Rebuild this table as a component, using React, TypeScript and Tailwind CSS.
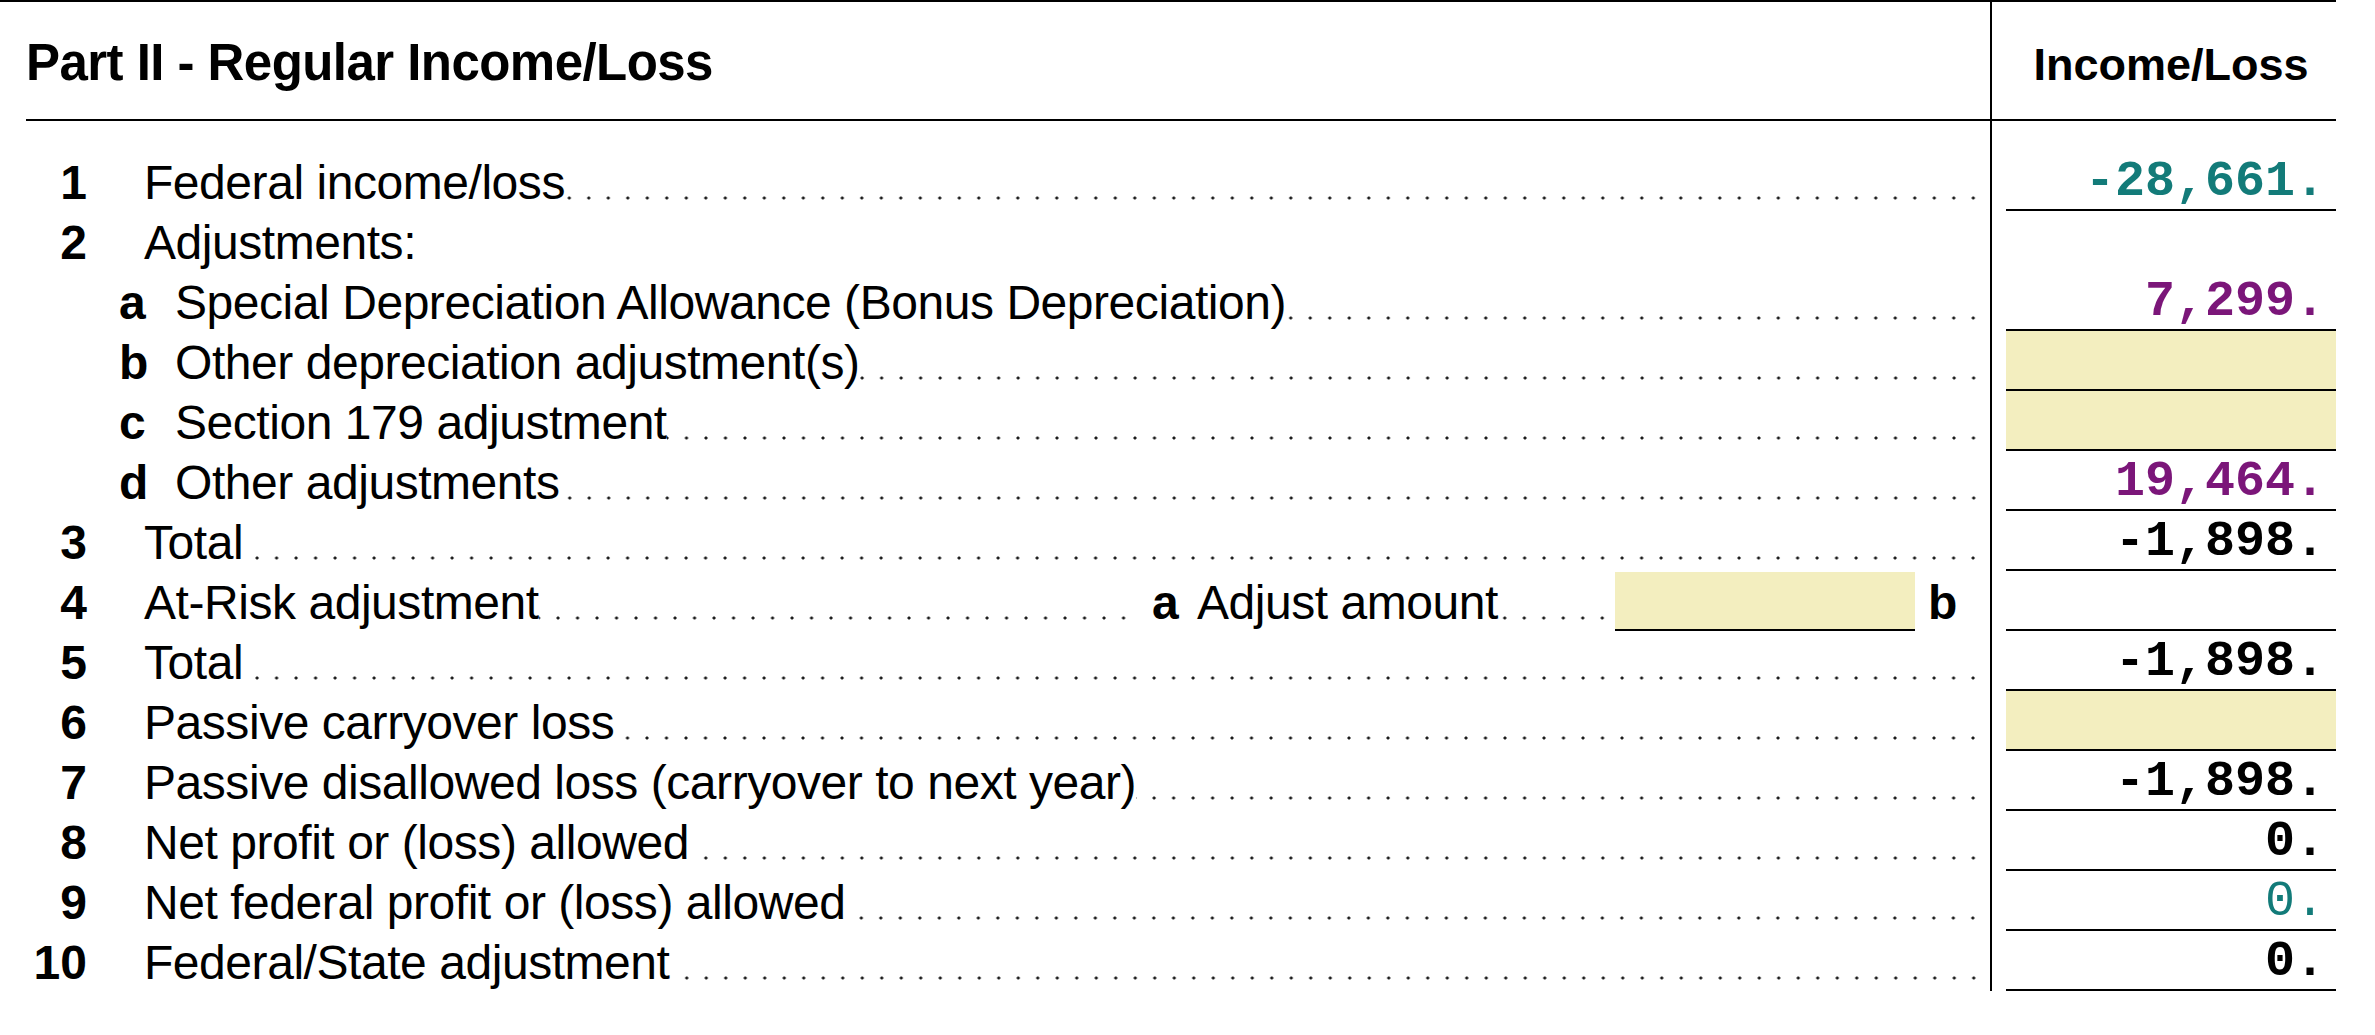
import React from "react";

type Cell = "none" | "line" | "yellow";
type RowData = {
  num?: string;
  letter?: string;
  label: string;
  leader?: boolean;
  value?: string;
  color?: "teal" | "purple" | "black";
  light?: boolean;
  cell: Cell;
  special?: boolean;
};

const rows: RowData[] = [
  { num: "1", label: "Federal income/loss", leader: true, value: "-28,661.", color: "teal", cell: "line" },
  { num: "2", label: "Adjustments:", cell: "none" },
  { letter: "a", label: "Special Depreciation Allowance (Bonus Depreciation)", leader: true, value: "7,299.", color: "purple", cell: "line" },
  { letter: "b", label: "Other depreciation adjustment(s)", leader: true, cell: "yellow" },
  { letter: "c", label: "Section 179 adjustment", leader: true, cell: "yellow" },
  { letter: "d", label: "Other adjustments", leader: true, value: "19,464.", color: "purple", cell: "line" },
  { num: "3", label: "Total", leader: true, value: "-1,898.", color: "black", cell: "line" },
  { num: "4", label: "At-Risk adjustment", leader: true, cell: "line", special: true },
  { num: "5", label: "Total", leader: true, value: "-1,898.", color: "black", cell: "line" },
  { num: "6", label: "Passive carryover loss", leader: true, cell: "yellow" },
  { num: "7", label: "Passive disallowed loss (carryover to next year)", leader: true, value: "-1,898.", color: "black", cell: "line" },
  { num: "8", label: "Net profit or (loss) allowed", leader: true, value: "0.", color: "black", cell: "line" },
  { num: "9", label: "Net federal profit or (loss) allowed", leader: true, value: "0.", color: "teal", light: true, cell: "line" },
  { num: "10", label: "Federal/State adjustment", leader: true, value: "0.", color: "black", cell: "line" },
];

const txt = "pt-[5px] leading-[54px] whitespace-nowrap";

function Leader({ className = "" }: { className?: string }) {
  return (
    <div
      className={`self-end mb-[10px] h-[6px] bg-[image:radial-gradient(circle,#1a1a1a_1.3px,transparent_1.8px)] bg-[length:19.5px_6px] bg-repeat-x bg-[position:right_center] ${className}`}
    />
  );
}

function ValueCell({ row }: { row: RowData }) {
  if (row.cell === "none") return null;
  const colorCls =
    row.color === "teal"
      ? "text-[#137b79]"
      : row.color === "purple"
      ? "text-[#7b1679]"
      : "text-black";
  return (
    <div
      className={`h-[60px] border-b-2 border-black flex justify-end pr-[11px] pt-[2px] ${
        row.cell === "yellow" ? "bg-[#f3eebf]" : ""
      }`}
    >
      {row.value && (
        <span
          className={`font-['Liberation_Mono',monospace] text-[50px] leading-[58px] whitespace-pre tracking-normal ${
            row.light ? "font-normal" : "font-bold"
          } ${colorCls}`}
        >
          {row.value}
        </span>
      )}
    </div>
  );
}

function Row({ row }: { row: RowData }) {
  return (
    <div className="flex">
      <div className="flex h-[60px] w-[1992px] shrink-0 border-r-2 border-black pr-[7px] text-[48px] tracking-[-0.45px] text-black">
        <div className={`w-[87px] shrink-0 text-right font-bold tracking-normal ${txt}`}>{row.num}</div>
        {row.letter ? (
          <>
            <div className={`ml-[32px] w-[56px] shrink-0 font-bold tracking-normal ${txt}`}>{row.letter}</div>
            <div className={txt}>{row.label}</div>
          </>
        ) : (
          <div className={`ml-[57px] ${txt}`}>{row.label}</div>
        )}
        {row.special ? (
          <>
            <Leader className="flex-1 mr-[7px]" />
            <div className="flex w-[843px] shrink-0">
              <div className={`ml-[12px] w-[45px] shrink-0 font-bold tracking-normal ${txt}`}>a</div>
              <div className={txt}>Adjust amount</div>
              <Leader className="flex-1 mr-[3px]" />
              <div className="w-[300px] shrink-0 h-[59px] mt-[1px] bg-[#f3eebf] border-b-2 border-black" />
              <div className={`ml-[13px] w-[55px] shrink-0 font-bold tracking-normal ${txt}`}>b</div>
            </div>
          </>
        ) : row.leader ? (
          <Leader className="flex-1" />
        ) : (
          <div className="flex-1" />
        )}
      </div>
      <div className="w-[344px] shrink-0 pl-[14px]">
        <ValueCell row={row} />
      </div>
    </div>
  );
}

export default function App() {
  return (
    <div className="min-h-[1035px] w-full bg-white font-['Liberation_Sans',Arial,sans-serif] text-black">
      <div className="w-[2336px] border-t-2 border-black">
        <div className="flex">
          <div className="h-[119px] w-[1992px] shrink-0 border-r-2 border-black">
            <div className="ml-[26px] h-[119px] border-b-2 border-black flex items-end pb-[31px]">
              <h1 className="text-[51px] font-bold leading-none tracking-[-0.55px] whitespace-nowrap">
                Part II - Regular Income/Loss
              </h1>
            </div>
          </div>
          <div className="h-[119px] w-[344px] shrink-0 border-b-2 border-black">
            <div className="ml-[14px] h-full flex items-end justify-center pb-[32px]">
              <span className="text-[45px] font-bold leading-none whitespace-nowrap">Income/Loss</span>
            </div>
          </div>
        </div>
        <div className="flex">
          <div className="h-[30px] w-[1992px] shrink-0 border-r-2 border-black" />
        </div>
        {rows.map((r, i) => (
          <Row key={i} row={r} />
        ))}
      </div>
    </div>
  );
}
